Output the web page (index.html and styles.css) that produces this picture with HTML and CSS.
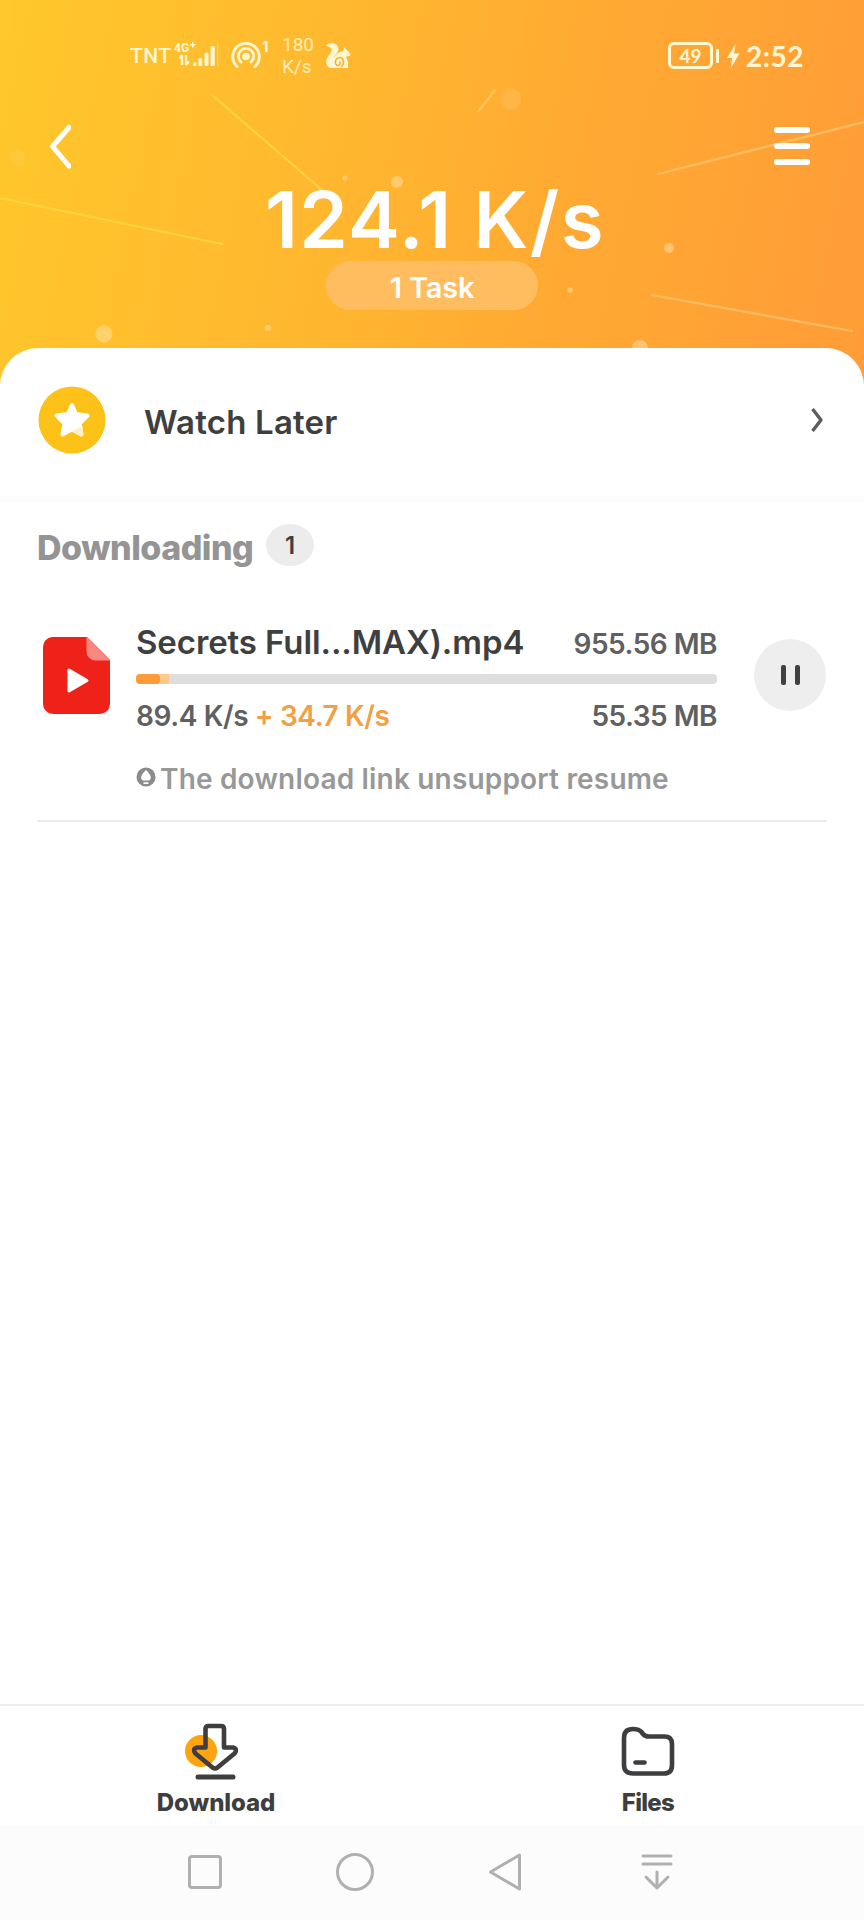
FILE: index.html
```html
<!DOCTYPE html>
<html lang="en">
<head>
<meta charset="utf-8">
<title>Downloads</title>
<link rel="stylesheet" href="styles.css">
</head>
<body>
<div class="screen">
  <header class="hero">
    <svg class="hero-art" width="864" height="400" viewBox="0 0 864 400">
      <g stroke="#ffe07a" stroke-opacity=".6" stroke-width="2.2" stroke-linecap="round">
        <path d="M0 198 222 244M212 95 322 190" stroke="#ffe14d"/>
        <path d="M478 112 495 90M658 174 864 122M652 295 852 331" stroke="#ffd080"/>
      </g>
      <g fill="#ffdf9c" fill-opacity=".55">
        <circle cx="104" cy="334" r="8.5"/><circle cx="397" cy="182" r="6"/><circle cx="345" cy="178" r="2.5"/>
        <circle cx="268" cy="328" r="3"/><circle cx="482" cy="243" r="4.5"/><circle cx="669" cy="248" r="5"/>
        <circle cx="570" cy="290" r="2.7"/><circle cx="640" cy="348" r="8"/>
        <circle cx="511" cy="99" r="10.5" fill-opacity=".18"/><circle cx="18" cy="158" r="8" fill-opacity=".12"/>
      </g>
    </svg>
    <div class="status">
      <div class="status-left">
        <span class="carrier">TNT</span>
        <svg class="signal" width="45" height="28" viewBox="0 0 45 28" fill="currentColor">
          <text class="net" x="0" y="10">4G</text>
          <path d="M16 2h2v-2h1.500v2h2v1.500h-2v2H18v-2h-2z"/>
          <path d="M8 13v10M5.500 16.500 8 13M12 13v10M12 23l3-3.500" stroke="currentColor" stroke-width="2.300" fill="none"/>
          <rect x="19" y="20" width="3.500" height="4" rx="1.500"/><rect x="24.500" y="16" width="3.800" height="8" rx="1.500"/>
          <rect x="30.500" y="10.500" width="4" height="13.500" rx="1.500"/><rect x="36.500" y="4" width="4.300" height="20" rx="1.500"/>
          <rect x="43" y="1" width="1.500" height="23" opacity=".3"/>
        </svg>
        <svg class="hotspot" width="31" height="28" viewBox="0 0 31 28" fill="none" stroke="currentColor" stroke-width="2.800" stroke-linecap="round">
          <circle cx="15" cy="14.500" r="3.800" fill="currentColor" stroke="none"/>
          <path d="M10 20a7.700 7.700 0 1 1 10 0M6 24.500a13.300 13.300 0 1 1 18 0"/>
        </svg>
        <span class="hot-count">1</span>
        <span class="rate">180<br>K/s</span>
        <svg class="squirrel" width="26" height="26" viewBox="0 0 26 26" fill="currentColor">
          <path d="M1 2.500C5-1 13-.5 13.500 6c0 4-4 5.500-4.500 8.500 3-5 7-6 9.500-6.500L19 4l2.500 3c2.500 1 3.500 3 4 5-1 1.500-3 1.500-4.500 1.500l2 5.500c1 2-1 4 .500 6H7C2 25 .5 20 1.500 16.500 2.500 12.500 8 9.500 6.500 6 5.500 3.500 3 4 1 2.500z"/>
          <path d="M16 24c4-3 3-9-1-9.500-4 0-6 5-3.500 7.500 2.500 1.500 5-1.500 3-3.500" fill="none" stroke="#fdb02f" stroke-width="1.500"/>
        </svg>
      </div>
      <div class="status-right">
        <span class="battery">49</span><span class="battery-tip"></span>
        <svg class="bolt" width="13" height="24" viewBox="0 0 13 24" fill="currentColor"><path d="M8.500 0 0 14h5L4 24 12.500 9.500H7.200z"/></svg>
        <span class="clock">2:52</span>
      </div>
    </div>
    <div class="toolbar">
      <svg class="back" width="24" height="46" viewBox="0 0 24 46" fill="none" stroke="#fff" stroke-width="5" stroke-linecap="round" stroke-linejoin="round"><path d="M22 4.500 5.500 23.500 22 43"/></svg>
      <div class="menu"><i></i><i></i><i></i></div>
    </div>
    <div class="speed">124.1 K/s</div>
    <div class="task-pill"><span>1 Task</span></div>
  </header>

  <main class="sheet">
    <section class="watch">
      <svg width="68" height="68" viewBox="0 0 68 68">
        <circle cx="34" cy="34" r="33.500" fill="#fdc217"/>
        <path d="M34 19 38 28 49.500 29.500 41.500 37.500 43.500 48.500 34 43.500 24.500 48.500 26.500 37.500 18.500 29.500 30 28Z" fill="#fff" stroke="#fff" stroke-width="4" stroke-linejoin="round"/>
        <path d="M34 45.500 44.500 40 45.500 48.500Q45.300 51 42.500 50.200Z" fill="#fff0c4" />
      </svg>
      <span class="watch-label">Watch Later</span>
      <svg class="chevron" width="14" height="26" viewBox="0 0 14 26" fill="none" stroke="#5d5d5d" stroke-width="3.400" stroke-linejoin="round"><path d="M2.500 2 11 13 2.500 24"/></svg>
    </section>

    <section class="section-head">
      <h2>Downloading</h2><span class="count">1</span>
    </section>

    <article class="item">
      <svg class="file" width="68" height="78" viewBox="0 0 68 78">
        <path d="M9 0H44L67 23V67a10 10 0 0 1-10 10H10A10 10 0 0 1 0 67V10A10 10 0 0 1 9 0z" fill="#ee2219"/>
        <path d="M43.500 0V14a9 9 0 0 0 9 9.500H67z" fill="#f98883"/>
        <path d="M26 33 44 43.500 26 54z" fill="#fff" stroke="#fff" stroke-width="3" stroke-linejoin="round"/>
      </svg>
      <div class="info">
        <div class="row"><span class="name">Secrets Full...MAX).mp4</span><span class="num">955.56 MB</span></div>
        <div class="bar"><div class="buffer"><div class="done"></div></div></div>
        <div class="row row-speed"><span class="rate-now">89.4 K/s <b>+ 34.7 K/s</b></span><span class="num">55.35 MB</span></div>
        <div class="note">
          <svg width="20" height="20" viewBox="0 0 20 20"><circle cx="10" cy="10" r="9.500" fill="#8b8b8b"/><path d="M10 3C12 5 14.800 8 14.800 10.500 14.800 12 14 13 13 13.500H7C6 13 5.200 12 5.200 10.500 5.200 8 8 5 10 3zM7.500 15.300h5v1.700h-5z" fill="#fff"/></svg>
          <span>The download link unsupport resume</span>
        </div>
      </div>
      <button class="pause" aria-label="Pause"><i></i><i></i></button>
    </article>
  </main>

  <nav class="tabs">
    <div class="tab">
      <svg class="dl-icon" width="56" height="58" viewBox="0 0 56 58" fill="none" stroke="#3e3e40" stroke-width="4.600" stroke-linecap="round" stroke-linejoin="round">
        <circle cx="17" cy="29" r="16" fill="#fda510" stroke="none"/>
        <path d="M21.500 25.500V7Q21.500 4 24.500 4H37Q40 4 40 7V25.500H49Q54 27 50.500 31.500L33.500 45.500Q31 47.500 28.500 45.500L11.500 31.500Q8 27 13 25.500Z"/>
        <path d="M14 55H49" stroke-width="5"/>
      </svg>
      <span class="tab-dl">Download</span>
    </div>
    <div class="tab">
      <svg width="54" height="58" viewBox="0 0 54 58" fill="none" stroke="#3e3e40" stroke-width="4.600" stroke-linecap="round" stroke-linejoin="round">
        <path d="M3 43V16Q3 7 12 7Q18 7 20.500 10L22 12Q24 14.500 28 14.500H43.500Q51 14.500 51 22V43Q51 51.500 43 51.500H12Q3 51.500 3 43Z"/>
        <path d="M14.500 40.500H23.500"/>
      </svg>
      <span class="tab-files">Files</span>
    </div>
  </nav>

  <footer class="sysnav">
    <svg width="36" height="40" viewBox="0 0 36 40"><rect x="2.500" y="4.500" width="31" height="31" rx="2.500"/></svg>
    <svg width="40" height="40" viewBox="0 0 40 40"><circle cx="20" cy="20" r="17.500"/></svg>
    <svg width="34" height="40" viewBox="0 0 34 40"><path d="M2.500 20 31.500 3V37Z"/></svg>
    <svg width="34" height="40" viewBox="0 0 34 40"><path d="M3 4H31M3 12H31M17 20V36M6 25 17 36 28 25"/></svg>
  </footer>
</div>
</body>
</html>
```

FILE: styles.css
```css
* { box-sizing: border-box; }
body { margin: 0; background: #fff; font-family: Inter, "Liberation Sans", sans-serif; color: #3f3f3f; }
.screen { width: 864px; height: 1920px; display: flex; flex-direction: column; overflow: hidden; }
svg { display: block; flex: none; }

.hero { position: relative; height: 400px; flex: none; background: linear-gradient(102deg, #ffc82b 0%, #ffb92f 35%, #ffa833 68%, #ff9c38 100%); color: #fff7d2; display: flex; flex-direction: column; align-items: center; }
.hero-art { position: absolute; left: 0; top: 0; }
.status, .toolbar, .speed, .task-pill { position: relative; }
.status { width: 100%; height: 110px; display: flex; justify-content: space-between; padding: 0 60px 0 130px; align-items: center; }
.status-left, .status-right { display: flex; align-items: center; padding-top: 1px; }
.carrier { font: 500 21px/28px Roboto, sans-serif; width: 44px; letter-spacing: .4px; white-space: nowrap; padding-top: 1px; }
.net { font: 700 12px Roboto, sans-serif; }
.signal { margin-top: 1px; }
.hotspot { margin: 0 0 0 12px; }
.hot-count { font: 700 15px/20px Inter, sans-serif; margin-bottom: 17px; width: 10px; }
.rate { font: 400 19px/22px Roboto, sans-serif; margin-left: 10px; width: 33px; padding-top: 1px; opacity: .85; }
.squirrel { margin-left: 10px; }
.battery { width: 45px; height: 27px; border: 3px solid currentColor; border-radius: 6px; font: 700 19px/21px Lato, sans-serif; text-align: center; }
.battery-tip { width: 3px; height: 14px; background: currentColor; margin-left: 3px; border-radius: 1px; }
.bolt { margin-left: 8px; }
.clock { margin-left: 6px; width: 58px; font: 700 28px/34px Lato, sans-serif; letter-spacing: .5px; white-space: nowrap; }

.toolbar { width: 100%; height: 72px; display: flex; justify-content: space-between; align-items: center; padding: 0 54px 0 47px; }
.menu { width: 36px; display: grid; gap: 10px; }
.menu i { height: 6px; border-radius: 3px; background: #fff; }
.speed { height: 79px; padding-left: 6px; font-size: 78px; line-height: 75px; font-weight: 600; letter-spacing: 1.400px; color: #fff; white-space: nowrap; }
.task-pill { width: 212px; height: 49px; border-radius: 25px; background: #ffbd60; color: #fff; font-size: 29px; line-height: 53px; font-weight: 600; letter-spacing: -.2px; text-align: center; }

.sheet { position: relative; flex: 1; margin-top: -52px; background: #fff; border-radius: 38px 38px 0 0; }
.watch { height: 154px; border-bottom: 6px solid #fbfbfb; display: flex; align-items: center; padding: 0 40px 4px 38px; }
.watch-label { flex: 1; margin-left: 38px; font-size: 33px; font-weight: 600; padding-top: 3px; letter-spacing: .2px; }
.section-head { display: flex; align-items: center; height: 86px; padding: 0 36px; }
h2 { margin: 5px 12px 0 1px; width: 217px; font-size: 34px; line-height: 40px; font-weight: 800; letter-spacing: -.5px; color: #949494; }
.count { width: 48px; height: 42px; border-radius: 50%; background: #ececec; font-size: 24px; font-weight: 600; line-height: 44px; text-align: center; }
.item { display: flex; height: 234px; margin: 0 37px; border-bottom: 2px solid #ececec; padding-top: 30px; }
.file { margin: 19px 0 0 6px; }
.info { width: 581px; margin-left: 25px; color: #606060; font-size: 28px; font-weight: 600; }
.row { display: flex; justify-content: space-between; align-items: baseline; height: 50px; line-height: 48px; white-space: nowrap; }
.name { font-size: 33px; letter-spacing: -.1px; color: #3f3f3f; }
.num { letter-spacing: -.5px; }
.bar { height: 10px; margin-top: 6px; border-radius: 4px; background: #dedede; overflow: hidden; }
.buffer { width: 33px; height: 10px; background: #ffc98c; }
.done { width: 24px; height: 10px; background: #fb9b3a; border-radius: 4px; }
.row-speed { margin-top: 8px; }
.rate-now { letter-spacing: -.400px; }
.rate-now b { color: #f1a043; font-weight: 600; }
.note { display: flex; margin-top: 12px; height: 50px; align-items: center; gap: 4px; color: #989898; letter-spacing: .180px; white-space: nowrap; }
.note svg { margin-bottom: 5px; }
.pause { width: 72px; height: 72px; margin: 21px 0 0 37px; border: 0; padding: 0; border-radius: 50%; background: #eee; display: flex; justify-content: center; align-items: center; gap: 9px; flex: none; }
.pause i { width: 5px; height: 20px; border-radius: 2px; background: #404040; }

.tabs { height: 121px; flex: none; border-top: 2px solid #ededed; display: grid; grid-template-columns: 1fr 1fr; }
.tab { display: flex; flex-direction: column; align-items: center; padding-top: 16px; font-size: 24px; line-height: 30px; font-weight: 800; color: #3e3e40; }
.tab span { margin-top: 8px; letter-spacing: -.1px; }
.tab .tab-files { letter-spacing: -.7px; }
.dl-icon { margin-right: 8px; }
.sysnav { height: 95px; flex: none; background: #fcfcfc; display: flex; align-items: center; padding: 0 0 1px 187px; }
.sysnav svg { fill: none; stroke: #b0b0b0; stroke-width: 3px; stroke-linecap: round; stroke-linejoin: round; }
.sysnav svg:nth-child(2) { margin-left: 112px; }
.sysnav svg:nth-child(3) { margin-left: 113px; }
.sysnav svg:nth-child(4) { margin-left: 118px; }
```
